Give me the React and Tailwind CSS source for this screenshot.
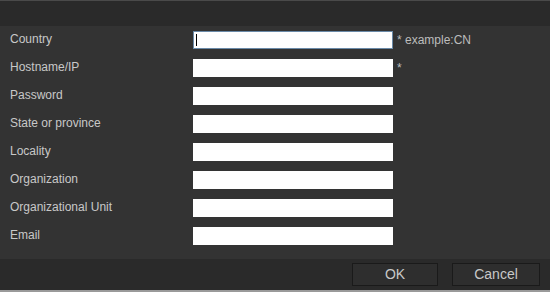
import React from 'react';

const fields = [
  { label: 'Country', note: '* example:CN', focused: true },
  { label: 'Hostname/IP', note: '*' },
  { label: 'Password' },
  { label: 'State or province' },
  { label: 'Locality' },
  { label: 'Organization' },
  { label: 'Organizational Unit' },
  { label: 'Email' },
];

export default function App() {
  return (
    <div className="w-[550px] h-[292px] flex flex-col bg-[#333333] font-['Liberation_Sans',Arial,sans-serif] text-[12px] text-[#c8c8c8] overflow-hidden">
      <div className="h-[26px] bg-[#2a2a2a] border-t border-[#4a4a4a]" />

      <div className="flex-1 flex flex-col">
        {fields.map((f) => (
          <div key={f.label} className="h-[28px] flex items-center">
            <label className="w-[193px] pl-[10px] leading-none mb-[3px]">{f.label}</label>
            <div
              className={`w-[200px] h-[18px] bg-white ${
                f.focused ? 'border border-[#6a8aa8] flex items-center pl-[2px]' : ''
              }`}
            >
              {f.focused && <span className="w-px h-[12px] bg-black" />}
            </div>
            {f.note && (
              <span className="ml-[4px] text-[#bdbdbd] leading-none self-start mt-[8px]">{f.note}</span>
            )}
          </div>
        ))}
      </div>

      <div className="h-[33px] bg-[#2a2a2a] border-b-2 border-[#9a9a9a] flex items-start justify-end gap-[14px] pt-[4px] pr-[10px]">
        <button className="w-[86px] h-[23px] bg-[#2e2e2e] border border-[#1a1a1a] text-[14px] text-[#c8c8c8]">
          OK
        </button>
        <button className="w-[88px] h-[23px] bg-[#2e2e2e] border border-[#1a1a1a] text-[14px] text-[#c8c8c8]">
          Cancel
        </button>
      </div>
    </div>
  );
}
